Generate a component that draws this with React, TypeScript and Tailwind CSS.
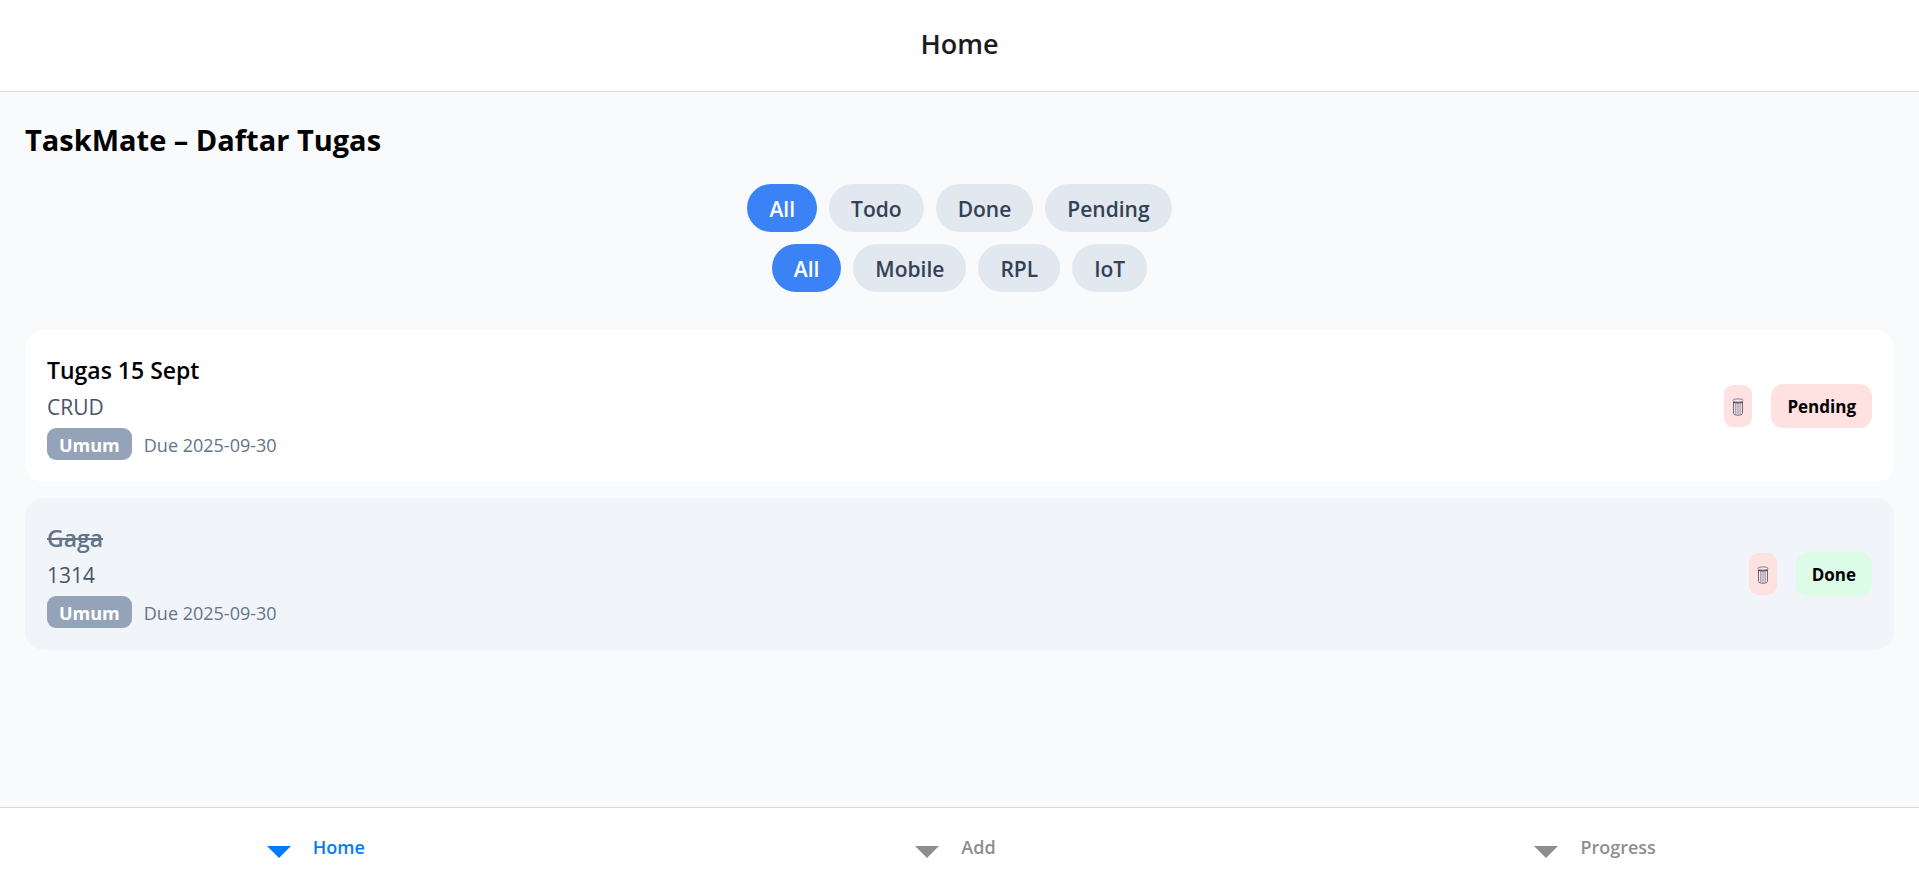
import { useState } from "react";

type Task = {
  id: number;
  title: string;
  description: string;
  category: string;
  deadline: string;
  done: boolean;
};

const initialTasks: Task[] = [
  { id: 1, title: "Tugas 15 Sept", description: "CRUD", category: "Umum", deadline: "2025-09-30", done: false },
  { id: 2, title: "Gaga", description: "1314", category: "Umum", deadline: "2025-09-30", done: true },
];

const statuses = ["All", "Todo", "Done", "Pending"];
const categories = ["All", "Mobile", "RPL", "IoT"];
const tabs = ["Home", "Add", "Progress"];

function FilterRow({ label, options, value, onChange }: {
  label: string;
  options: string[];
  value: string;
  onChange: (v: string) => void;
}) {
  return (
    <div role="group" aria-label={label} className="flex flex-wrap justify-center gap-3">
      {options.map((o) => (
        <button
          key={o}
          type="button"
          aria-pressed={o === value}
          onClick={() => onChange(o)}
          className={
            "h-12 rounded-full px-[22px] pt-0.5 text-[21px] leading-8 font-semibold " +
            (o === value ? "bg-[#3b82f6] text-white" : "bg-[#e2e8f0] text-[#334155]")
          }
        >
          {o}
        </button>
      ))}
    </div>
  );
}

function TrashIcon() {
  return (
    <svg width="12" height="18" viewBox="0 0 12 18" fill="none" aria-hidden="true">
      <path d="M1.500 3.500v12c.3 1.200 2 1.700 4.500 1.700s4.200-.5 4.500-1.700v-12" fill="#f6e6ec" stroke="#6d6a7c" />
      <path d="M3.800 5v11M6 5v11.500M8.200 5v11" stroke="#93798a" strokeWidth=".9" />
      <ellipse cx="6" cy="2.500" rx="5.200" ry="1.600" fill="#f7eeee" stroke="#8a7f86" />
      <path d="M1 4.300c2 .8 8 .8 10 0" stroke="#4b3f48" />
    </svg>
  );
}

function TaskCard({ task, onToggle, onDelete }: { task: Task; onToggle: () => void; onDelete: () => void }) {
  return (
    <li
      className={
        "flex items-center justify-between rounded-[19px] p-[22px] " + (task.done ? "bg-[#f1f5f9]" : "bg-white")
      }
    >
      <div>
        <h2
          className={
            "text-[23px] leading-9 font-semibold " + (task.done ? "text-[#64748b] line-through" : "text-black")
          }
        >
          {task.title}
        </h2>
        <p className="mt-1 text-[21px] leading-[30px] text-[#475569]">{task.description}</p>
        <div className="mt-1.5 flex items-center gap-3">
          <span className="rounded-[9px] bg-[#94a3b8] px-3 pt-1 pb-0.5 text-lg leading-[26px] font-bold text-white">
            {task.category}
          </span>
          <span className="pt-0.5 text-lg leading-[26px] text-[#64748b]">Due {task.deadline}</span>
        </div>
      </div>
      <div className="flex items-center gap-[19px]">
        <button
          type="button"
          aria-label={"Delete " + task.title}
          onClick={onDelete}
          className="flex h-[42px] w-7 items-center justify-center rounded-[9px] bg-[#fee2e2] pt-0.5"
        >
          <TrashIcon />
        </button>
        <button
          type="button"
          onClick={onToggle}
          className={
            "h-11 rounded-xl px-4 pt-0.5 text-[17px] leading-[26px] font-bold text-black " +
            (task.done ? "bg-[#dcfce7]" : "bg-[#fee2e2]")
          }
        >
          {task.done ? "Done" : "Pending"}
        </button>
      </div>
    </li>
  );
}

export default function App() {
  const [tasks, setTasks] = useState(initialTasks);
  const [status, setStatus] = useState("All");
  const [category, setCategory] = useState("All");

  const visible = tasks.filter(
    (t) =>
      (status === "All" || (status === "Done") === t.done) && (category === "All" || t.category === category),
  );

  return (
    <div className="flex min-h-screen flex-col bg-[#f8fafc] font-['Open_Sans','Noto_Sans',sans-serif]">
      <header className="border-b border-[#d8d8d8] bg-white pt-[22px] pb-[26px] text-center text-[27px] leading-[43px] font-semibold text-[#1c1c1e]">
        Home
      </header>
      <main className="flex-1 px-[25px] pt-[25px]">
        <h1 className="text-[29px] leading-[46px] font-bold text-black">TaskMate – Daftar Tugas</h1>
        <div className="mt-[21px] flex flex-col gap-3">
          <FilterRow label="Status" options={statuses} value={status} onChange={setStatus} />
          <FilterRow label="Category" options={categories} value={category} onChange={setCategory} />
        </div>
        <ul className="mt-[38px] flex flex-col gap-4">
          {visible.map((t) => (
            <TaskCard
              key={t.id}
              task={t}
              onToggle={() => setTasks(tasks.map((x) => (x.id === t.id ? { ...x, done: !x.done } : x)))}
              onDelete={() => setTasks(tasks.filter((x) => x.id !== t.id))}
            />
          ))}
        </ul>
      </main>
      <nav className="grid grid-cols-3 border-t border-[#d8d8d8] bg-white">
        {tabs.map((tab) => (
          <a
            key={tab}
            href={"#" + tab.toLowerCase()}
            aria-current={tab === "Home" ? "page" : undefined}
            className={
              "flex h-[74px] items-center justify-center gap-[22px] pt-1 pr-2 text-lg font-semibold " +
              (tab === "Home" ? "text-[#007aff]" : "text-[#8e8e8f]")
            }
          >
            <svg width="24" height="28" viewBox="0 0 24 28" fill="currentColor" aria-hidden="true">
              <path d="M0 13h24L12 25z" />
            </svg>
            {tab}
          </a>
        ))}
      </nav>
    </div>
  );
}
